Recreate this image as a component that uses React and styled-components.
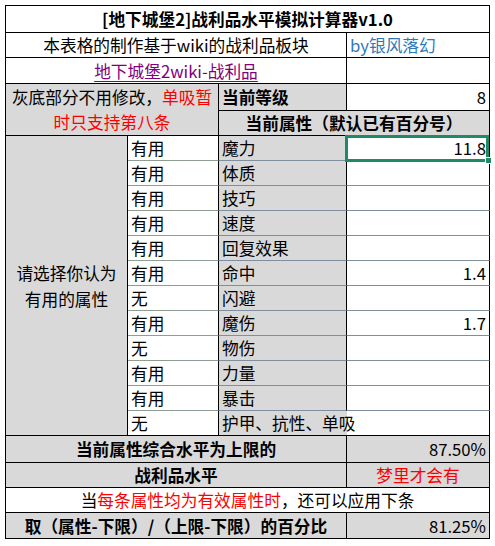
import React from "react";
import styled, { createGlobalStyle, css } from "styled-components";

const Global = createGlobalStyle`
  html, body { margin: 0; padding: 0; background: #fff; }
  body { font-family: "Noto Sans CJK SC", "Noto Sans", sans-serif; color: #000; }
`;

const GRAY = "#d9d9d9";

const Page = styled.div`
  padding: 5px 0 0 5px;
`;

const Sheet = styled.div`
  display: grid;
  grid-template-columns: 122px 91px 128px 143px;
  grid-template-rows: 27px 25px 26px 27px 25px repeat(12, 25px) 27px 25px 25px 26px;
  width: max-content;
  border-top: 1px solid #000;
  border-left: 1px solid #000;
  background: #fff;
  font-size: 16.7px;
  line-height: 24px;
`;

const bottomBorder = (dash) =>
  dash === "green"
    ? "1px solid #8e9e92"
    : dash === "blue"
    ? "1px solid #7f8fa0"
    : "1px solid #000";

const Cell = styled.div`
  grid-column: ${(p) => p.$col} / span ${(p) => p.$span || 1};
  grid-row: ${(p) => p.$row} / span ${(p) => p.$rows || 1};
  display: flex;
  align-items: center;
  justify-content: ${(p) =>
    p.$align === "right" ? "flex-end" : p.$align === "left" ? "flex-start" : "center"};
  text-align: ${(p) => p.$align || "center"};
  padding: 0 3px;
  white-space: nowrap;
  position: relative;
  font-weight: ${(p) => (p.$bold ? 700 : 400)};
  color: ${(p) => p.$color || "#000"};
  background: ${(p) => (p.$gray ? GRAY : "#fff")};
  border-right: ${(p) => (p.$noRight ? "none" : "1px solid #000")};
  border-bottom: ${(p) => bottomBorder(p.$dash)};
  ${(p) =>
    p.$over &&
    css`
      z-index: 1;
      overflow: visible;
    `}
`;

const Wrap = styled.div`
  white-space: normal;
  text-align: center;
  line-height: ${(p) => p.$lh || 25}px;
`;

const Red = styled.span`
  color: #ff0000;
`;

const Link = styled.span`
  color: #800080;
  text-decoration: underline;
  text-underline-offset: 3px;
`;

const Selection = styled.div`
  position: absolute;
  top: -1px;
  left: -2px;
  right: 0;
  bottom: -2px;
  border: 3px solid #1f8a66;
  pointer-events: none;
  z-index: 2;
`;

const Handle = styled.div`
  position: absolute;
  right: -6px;
  bottom: -5px;
  width: 5px;
  height: 5px;
  background: #1f8a66;
  border: 1px solid #fff;
`;

const rows = [
  ["有用", "魔力", "11.8"],
  ["有用", "体质", ""],
  ["有用", "技巧", ""],
  ["有用", "速度", ""],
  ["有用", "回复效果", ""],
  ["有用", "命中", "1.4"],
  ["无", "闪避", ""],
  ["有用", "魔伤", "1.7"],
  ["无", "物伤", ""],
  ["有用", "力量", ""],
  ["有用", "暴击", ""],
  ["无", "护甲、抗性、单吸", ""],
];

export default function App() {
  return (
    <>
      <Global />
      <Page>
        <Sheet>
          <Cell $col={1} $span={4} $row={1} $bold>
            [地下城堡2]战利品水平模拟计算器v1.0
          </Cell>

          <Cell $col={1} $span={3} $row={2}>
            本表格的制作基于wiki的战利品板块
          </Cell>
          <Cell $col={4} $row={2} $align="left" $color="#2f78b9">
            by银风落幻
          </Cell>

          <Cell $col={1} $span={3} $row={3}>
            <Link>地下城堡2wiki-战利品</Link>
          </Cell>
          <Cell $col={4} $row={3} />

          <Cell $col={1} $span={2} $row={4} $rows={2} $gray>
            <Wrap>
              灰底部分不用修改，<Red>单吸暂</Red>
              <br />
              <Red>时只支持第八条</Red>
            </Wrap>
          </Cell>
          <Cell $col={3} $row={4} $gray $bold $align="left">
            当前等级
          </Cell>
          <Cell $col={4} $row={4} $align="right">
            8
          </Cell>
          <Cell $col={3} $span={2} $row={5} $gray $bold>
            当前属性（默认已有百分号）
          </Cell>

          <Cell $col={1} $row={6} $rows={12} $gray>
            <Wrap $lh={26}>
              请选择你认为
              <br />
              有用的属性
            </Wrap>
          </Cell>

          {rows.map(([use, name, val], i) => {
            const r = 6 + i;
            const last = i === rows.length - 1;
            return (
              <React.Fragment key={name}>
                <Cell $col={2} $row={r} $align="left" $dash={last ? null : "green"}>
                  {use}
                </Cell>
                <Cell
                  $col={3}
                  $row={r}
                  $align="left"
                  $gray
                  $dash={last ? null : "blue"}
                  $noRight={last}
                  $over={last}
                >
                  {name}
                </Cell>
                <Cell $col={4} $row={r} $align="right" $dash={last ? null : "blue"}>
                  {val}
                  {i === 0 && (
                    <Selection>
                      <Handle />
                    </Selection>
                  )}
                </Cell>
              </React.Fragment>
            );
          })}

          <Cell $col={1} $span={3} $row={18} $gray $bold>
            当前属性综合水平为上限的
          </Cell>
          <Cell $col={4} $row={18} $gray $align="right">
            87.50%
          </Cell>

          <Cell $col={1} $span={3} $row={19} $gray $bold>
            战利品水平
          </Cell>
          <Cell $col={4} $row={19} $gray $color="#ff0000">
            梦里才会有
          </Cell>

          <Cell $col={1} $span={4} $row={20}>
            <span>
              当<Red>每条属性均为有效属性时</Red>，还可以应用下条
            </span>
          </Cell>

          <Cell $col={1} $span={3} $row={21} $gray $bold>
            取（属性-下限）/（上限-下限）的百分比
          </Cell>
          <Cell $col={4} $row={21} $gray $align="right">
            81.25%
          </Cell>
        </Sheet>
      </Page>
    </>
  );
}
